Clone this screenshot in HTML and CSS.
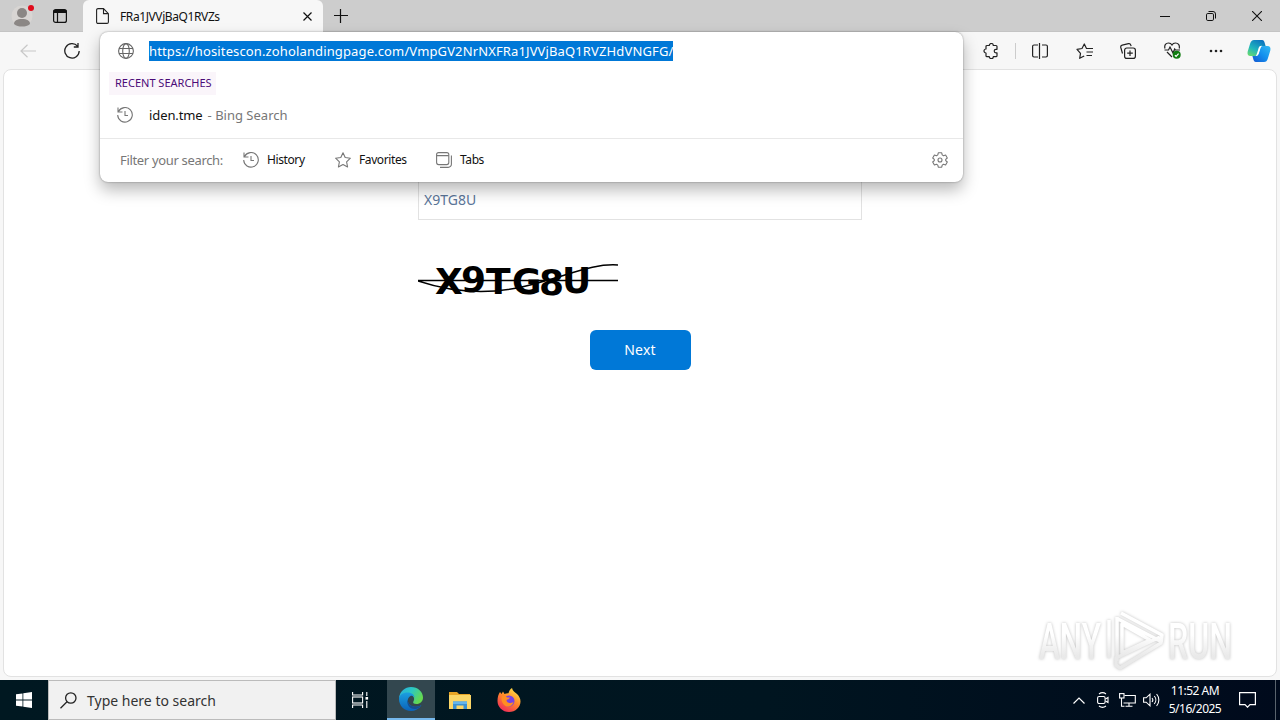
FILE: index.html
```html
<!DOCTYPE html>
<html lang="en">
<head>
	<meta charset="UTF-8">
	<title>FRa1JVVjBaQ1RVZs</title>
	<link rel="stylesheet" href="styles.css">
</head>
<body>
	<div class="titlebar">
		<div class="profile">
			<svg width="24" height="26" viewBox="0 0 24 26">
				<circle cx="11" cy="13" r="10.5" fill="#d8d5d3"/>
				<circle cx="11" cy="10" r="5" fill="#8b8785"/>
				<path d="M3 21c0-3.500 3-5 8-5s8 1.500 8 5c-2 2-5 2.500-8 2.500s-6-.5-8-2.500z" fill="#8b8785"/>
				<circle cx="20" cy="5" r="3" fill="#e00b1c"/>
			</svg>
		</div>
		<div class="workspace">
			<svg width="14" height="14" viewBox="0 0 14 14" fill="none" stroke="#111" stroke-width="1.2">
				<rect x=".6" y=".6" width="12.800" height="12.800" rx="2"/>
				<path d="M.6 2.500h12.800" stroke-width="3"/><path d="M4.500 3v10"/>
			</svg>
		</div>
		<div class="tab">
			<svg width="13" height="16" viewBox="0 0 13 16" fill="none" stroke="#222" stroke-width="1.1">
				<path d="M2 .6h5.500l4.900 5V14a1.400 1.400 0 0 1-1.400 1.400H2A1.400 1.400 0 0 1 .6 14V2A1.400 1.400 0 0 1 2 .6zM7.500.6V5.600h4.900"/>
			</svg>
			<span class="tab-title">FRa1JVVjBaQ1RVZs</span>
			<svg width="9" height="9" viewBox="0 0 9 9" stroke="#111" stroke-width="1.2"><path d="M.5.5l8 8M8.500.5l-8 8"/></svg>
		</div>
		<div class="new-tab">
			<svg width="14" height="14" viewBox="0 0 14 14" stroke="#111" stroke-width="1.2"><path d="M6.500 0v14M0 6.500h14"/></svg>
		</div>
		<div class="win-btns">
			<span><svg width="10" height="10" viewBox="0 0 10 10" stroke="#111"><path d="M0 5.500h10"/></svg></span>
			<span><svg width="10" height="10" viewBox="0 0 10 10" fill="none" stroke="#111"><rect x=".5" y="2.500" width="7" height="7" rx="1.300"/><path d="M2.500.5H7A2.500 2.500 0 0 1 9.500 3v4.500"/></svg></span>
			<span><svg width="10" height="10" viewBox="0 0 10 10" stroke="#111" stroke-width="1.100"><path d="M0 0l10 10M10 0L0 10"/></svg></span>
		</div>
	</div>

	<div class="toolbar">
		<div class="nav">
			<span><svg width="16" height="14" viewBox="0 0 16 14" fill="none" stroke="#c8c8c8" stroke-width="1.200"><path d="M16 7H1M7.500.7L1 7l6.500 6.300"/></svg></span>
			<span><svg width="16" height="16" viewBox="0 0 16 16" fill="none" stroke="#222" stroke-width="1.300"><path d="M13.500 3.200A7.200 7.200 0 1 0 15.200 8M14 0v4H9.800"/></svg></span>
		</div>
		<div class="tools">
			<span><svg width="16" height="16" viewBox="0 0 16 16" fill="none" stroke="#222" stroke-width="1.200" stroke-linejoin="round"><path d="M4 2.500h2.300a2 2 0 0 1 4 0H13a1 1 0 0 1 1 1v2.800h-1a1.800 1.800 0 0 0 0 3.600h1v2.800a1 1 0 0 1-1 1h-2.700a2 2 0 0 1-4 0H4a1 1 0 0 1-1-1V10a2 2 0 0 1 0-4V3.500a1 1 0 0 1 1-1z"/></svg></span>
			<i class="sep"></i>
			<span><svg width="16" height="16" viewBox="0 0 16 16" fill="none" stroke="#222" stroke-width="1.200"><path d="M6 2H2A1.400 1.400 0 0 0 .6 3.400v9.200A1.400 1.400 0 0 0 2 14h4M10 2h4a1.400 1.400 0 0 1 1.400 1.400v9.200A1.400 1.400 0 0 1 14 14h-4M7.500 0v16"/></svg></span>
			<span><svg width="17" height="16" viewBox="0 0 17 16" fill="none" stroke="#222" stroke-width="1.200" stroke-linejoin="round"><path d="M11.500 5.500h-1L8.300 1 6 5.500l-5 .8 3.500 4-.8 5 4.500-2.300M10 5.500h7M10.500 9h6.500M10.500 12.500h5.500"/></svg></span>
			<span><svg width="16" height="16" viewBox="0 0 16 16" fill="none" stroke="#222" stroke-width="1.200"><rect x="4.600" y="5" width="10.800" height="10.400" rx="2.200"/><path d="M10 7.500v5.500M7.200 10.200h5.600M2.500 10.500L.8 4.500a2 2 0 0 1 1.400-2.400L8.500.7a2 2 0 0 1 2.300 1.400l.3 1"/></svg></span>
			<span><svg width="17" height="17" viewBox="0 0 17 17" fill="none" stroke="#222" stroke-width="1.200"><path d="M1 6.500C0 3 2 1 4.500 1 6.500 1 7.500 2 8 3c.5-1 1.500-2 3.500-2C14 1 16 3 15.200 6.500M.5 8h4l1.500-3 3 6 1.700-4 .8 1h4.500M3 10l5 5"/><circle cx="12.700" cy="12.800" r="4" fill="#107c10" stroke="none"/><path d="M10.900 13.300l1.200 1 2.500-2.700" stroke="#fff"/></svg></span>
			<span><svg width="14" height="4" viewBox="0 0 14 4" fill="#222"><circle cx="2" cy="2" r="1.300"/><circle cx="7" cy="2" r="1.300"/><circle cx="12" cy="2" r="1.300"/></svg></span>
			<span class="copilot">
				<svg width="24" height="22" viewBox="0 0 24 22">
					<defs>
						<linearGradient id="cpA" x1=".2" y1="1" x2=".8" y2="0"><stop offset="0" stop-color="#63d873"/><stop offset=".4" stop-color="#1fb5bd"/><stop offset="1" stop-color="#0b6fbf"/></linearGradient>
						<linearGradient id="cpB" x1="0" y1="1" x2="1" y2="0"><stop offset="0" stop-color="#1456d0"/><stop offset=".5" stop-color="#1390ee"/><stop offset="1" stop-color="#35baf2"/></linearGradient>
					</defs>
					<path d="M7 0h8c2 0 2.500 2 3 4l.6 2h-3c-2 0-2.800 1-3.400 3l-1.500 4.500C10 15.500 9 16 7 16H3.500C1 16 0 14 .7 11.500L3 4C4 1 5 0 7 0z" fill="url(#cpA)"/>
					<path d="M17 22H9c-2 0-2.500-2-3-4l-.6-2H8c2 0 3-1 3.600-3l1.500-4.500C14 6.500 15 6 17 6h3.500c2.500 0 3.500 2 2.800 4.500L21 18c-1 3-2 4-4 4z" fill="url(#cpB)"/>
					<path d="M12.500 6.500c.7-.6 1.200-.7 2.300-.7-.8.7-1.100 1.700-1.500 3l-1.300 4.200c-.6 2-1.400 3-3 3l1.200-3.200 1.200-4c.3-1.200.6-1.800 1.100-2.300z" fill="#fff"/>
				</svg>
			</span>
		</div>
	</div>

	<div class="page">
		<div class="form">
			<div class="answer">X9TG8U</div>
			<svg class="captcha" width="200" height="50" viewBox="0 0 200 50">
				<g class="captcha-text">
					<text x="17" y="42">X</text>
					<text x="43" y="40">9</text>
					<text x="68" y="42">T</text>
					<text x="94" y="42">G</text>
					<text x="121" y="43">8</text>
					<text x="144" y="41">U</text>
				</g>
				<path d="M0 28.500h200M0 29C30 39 67 44 108 34S175 11 200 13" fill="none" stroke="#000" stroke-width="1.500"/>
			</svg>
			<button class="next">Next</button>
		</div>
	</div>

	<div class="taskbar">
		<div class="start">
			<svg width="16" height="16" viewBox="0 0 16 16" fill="#fff"><path d="M0 2.300L6.500 1.400v6.200H0zM7.300 1.300L16 0v7.600H7.300zM0 8.400h6.500v6.200L0 13.700zM7.300 8.400H16V16l-8.700-1.300z"/></svg>
		</div>
		<div class="search">
			<svg width="17" height="17" viewBox="0 0 17 17" fill="none" stroke="#222" stroke-width="1.300"><circle cx="10.800" cy="6" r="5.200"/><path d="M7 9.700L.5 16.200"/></svg>
			<span>Type here to search</span>
		</div>
		<div class="task view">
			<svg width="17" height="16" viewBox="0 0 17 16" fill="none" stroke="#fff" stroke-width="1.100"><path d="M.6 0v3h10V0M.6 16v-3h10v3M14.800 0v4M14.800 9v7"/><rect x=".6" y="5" width="10" height="6"/><rect x="13.500" y="5" width="2.600" height="2.600" fill="#fff" stroke="none"/></svg>
		</div>
		<div class="task active">
			<svg width="24" height="24" viewBox="0 0 24 24">
				<defs>
					<linearGradient id="edA" x1="0" y1="0" x2="1" y2=".5"><stop offset="0" stop-color="#2aa9e0"/><stop offset=".5" stop-color="#2bc8c4"/><stop offset="1" stop-color="#65d94f"/></linearGradient>
					<linearGradient id="edB" x1="0" y1="0" x2="0" y2="1"><stop offset="0" stop-color="#1b9fe0"/><stop offset="1" stop-color="#0b62b8"/></linearGradient>
				</defs>
				<path d="M0 11C1 4 6 0 12 0c7 0 12 5 12 10.500 0 4-3 6.500-6.500 6.500-3 0-4-1.500-3-2.800 2-3-.5-6.700-5-6.700C5 7.500 2 9 0 11z" fill="url(#edA)"/>
				<path d="M0 12c0-4 4-6.500 8.500-6.500 4.500 0 7 2.500 7 5-1-1.500-2.500-2-4-1.500-4 2-4 9 3 10.500 3 .6 5.500 0 8-1.500C20 22 16 24 12 24 5 24 0 18.500 0 12z" fill="url(#edB)"/>
				<path d="M8.500 12.500C7.500 17 10 22 16 22c3 0 5-2 6.500-4-2.500 1.500-5 2.100-8 1.500-3.500-.8-5.500-3-6-7z" fill="#164c90"/>
			</svg>
		</div>
		<div class="task">
			<svg width="22" height="19" viewBox="0 0 22 19">
				<path d="M0 1h8l2 2h11v4H0z" fill="#e8a526"/>
				<path d="M0 4h22v14H0z" fill="#fbd667"/>
				<path d="M4 18v-7.500h14V18h-3.500v-3.500h-7V18z" fill="#3b91d2"/><path d="M4 10.500h14V13H4z" fill="#64b5ec"/>
			</svg>
		</div>
		<div class="task">
			<svg width="24" height="24" viewBox="0 0 24 24">
				<defs><linearGradient id="ff" x1=".8" y1="0" x2=".2" y2="1"><stop offset="0" stop-color="#ffe64a"/><stop offset=".45" stop-color="#ff8a2a"/><stop offset="1" stop-color="#f0245c"/></linearGradient></defs>
				<path d="M3 4l1.500 2L6 3.500 7.500 6c1-.5 2.500-.8 4-.7C12 3 13 1 15 0c.5 3 3 4 5 6 2 2 3.500 4.500 3.500 7.500C23.500 19 18.500 24 12 24S.5 19 .5 13C.5 9 1.500 6 3 4z" fill="url(#ff)"/>
				<circle cx="12" cy="13" r="5.500" fill="#7542e5"/>
				<path d="M5 8c2-1 4 0 5 1.500h3c-.5 1.500-2.500 2-3.500 2.500 0 3 4 4 7 2-1 4-5 5.500-8 4S3.500 12 5 8z" fill="#ff8e22"/>
			</svg>
		</div>
		<div class="tray">
			<span><svg width="12" height="7" viewBox="0 0 12 7" fill="none" stroke="#fff" stroke-width="1.200"><path d="M.5 6.500L6 1l5.500 5.500"/></svg></span>
			<span><svg width="12" height="16" viewBox="0 0 12 16" fill="none" stroke="#fff" stroke-width="1.100"><rect x=".6" y="4.500" width="7.500" height="7" rx="1.500"/><path d="M8.500 7l2.500-1.500v5L8.500 9M2 2c2-1.500 5-1.500 7 0M2 14c2 1.500 5 1.500 7 0"/></svg></span>
			<span><svg width="17" height="14" viewBox="0 0 17 14" fill="none" stroke="#fff" stroke-width="1.100"><path d="M5.500 2.500h10.800v7.500H4.500M10 10v3M6.500 13.300h7M2.500 5v8.300h3"/><rect x=".6" y=".6" width="4.400" height="4.400"/></svg></span>
			<span><svg width="17" height="14" viewBox="0 0 17 14" fill="none" stroke="#fff" stroke-width="1.100"><path d="M.6 4.800h2.600L7 1.200v11.600L3.200 9.200H.6zM9 5c1 1.200 1 2.800 0 4M11.300 3c2 2.300 2 5.700 0 8M13.600 1c3 3.500 3 8.500 0 12"/></svg></span>
			<div class="clock"><div>11:52 AM</div><div>5/16/2025</div></div>
			<div class="notif"><svg width="17" height="16" viewBox="0 0 17 16" fill="none" stroke="#fff" stroke-width="1.200"><path d="M.6.6h15.800v12H11l-2.500 2.600L6 12.600H.6z"/></svg></div>
			<i class="desktop"></i>
		</div>
	</div>

	<!-- address bar dropdown, lies over toolbar and page -->
	<div class="omnibox">
		<div class="url-row">
			<svg width="16" height="16" viewBox="0 0 16 16" fill="none" stroke="#666" stroke-width="1.100"><circle cx="8" cy="8" r="7.400"/><ellipse cx="8" cy="8" rx="3.300" ry="7.400"/><path d="M1 5.500h14M1 10.500h14"/></svg>
			<span class="url">https://hositescon.zoholandingpage.com/VmpGV2NrNXFRa1JVVjBaQ1RVZHdVNGFG/</span>
		</div>
		<div class="recent">RECENT SEARCHES</div>
		<div class="result">
			<svg width="16" height="16" viewBox="0 0 16 16" fill="none" stroke="#777" stroke-width="1.100"><path d="M1.500 4.500a7.300 7.300 0 1 1-.8 3.500M1 .5v4.500h4.500M8 4v4.500h3"/></svg>
			<span class="query">iden.tme</span><span class="engine">- Bing Search</span>
		</div>
		<div class="filters">
			<span class="filter-label">Filter your search:</span>
			<div class="filter history"><svg width="16" height="16" viewBox="0 0 16 16" fill="none" stroke="#777" stroke-width="1.100"><path d="M1.500 4.500a7.300 7.300 0 1 1-.8 3.500M1 .5v4.500h4.500M8 4v4.500h3"/></svg><span>History</span></div>
			<div class="filter favs"><svg width="16" height="16" viewBox="0 0 16 16" fill="none" stroke="#777" stroke-width="1.100" stroke-linejoin="round"><path d="M8 .8l2.200 4.700 5.200.7-3.800 3.600 1 5.200L8 12.500 3.400 15l1-5.200L.6 6.200l5.200-.7z"/></svg><span>Favorites</span></div>
			<div class="filter tabs"><svg width="16" height="16" viewBox="0 0 16 16" fill="none" stroke="#777" stroke-width="1.100"><rect x=".6" y=".6" width="12.200" height="12" rx="2"/><path d="M.6 3.600h12.200M15.400 3.500v8.700a3.200 3.200 0 0 1-3.200 3.200H4"/></svg><span>Tabs</span></div>
			<svg class="gear" width="16" height="16" viewBox="0 0 16 16" fill="none" stroke="#777" stroke-width="1.100" stroke-linejoin="round"><path d="M6.300.8h3.400l.5 2.100 1.300.8 2.100-.7 1.700 3-1.600 1.400v1.200l1.600 1.400-1.700 3-2.100-.7-1.300.8-.5 2.100H6.300l-.5-2.100-1.300-.8-2.100.7-1.700-3 1.600-1.400V7.400L.7 6l1.700-3 2.100.7 1.300-.8z"/><circle cx="8" cy="8" r="2"/></svg>
		</div>
	</div>

	<svg class="watermark" width="210" height="68" viewBox="0 0 210 68">
		<defs><linearGradient id="wm" gradientUnits="userSpaceOnUse" x1="0" y1="4" x2="0" y2="64"><stop offset=".4" stop-color="#fff"/><stop offset=".75" stop-color="#e9e9e9"/></linearGradient></defs>
		<g class="mark-text" fill="url(#wm)">
			<text x="3" y="52" textLength="62" lengthAdjust="spacingAndGlyphs">ANY</text>
			<text x="132" y="52" textLength="64" lengthAdjust="spacingAndGlyphs">RUN</text>
		</g>
		<path d="M81 10v44M82 12l42 22M85 6l41 22-1 8-41 25-4-3V51l44-21M86 17v29l28-13zM73 13v38" fill="none" stroke="url(#wm)" stroke-width="3.500" stroke-linejoin="round"/>
	</svg>
</body>
</html>
```
FILE: styles.css
```css
*{padding: 0;margin: 0;box-sizing: border-box;}
body{
	width: 1280px;
	height: 720px;
	overflow: hidden;
	display: flex;
	flex-direction: column;
	position: relative;
	background-color: #f7f7f7;
	font-family: "Noto Sans", "Open Sans", sans-serif;
	font-size: 13px;
	color: #111;
}
svg{
	display: block;
	flex: none;
}
span{
	white-space: nowrap;
}

/* title bar */
.titlebar{
	height: 32px;
	flex: none;
	display: flex;
	background-color: #cdcdcd;
	border-bottom: 1px solid #c4c4c4;
}
.profile{
	width: 44px;
	padding: 3px 0 0 11px;
}
.workspace{
	width: 39px;
	padding: 9px 0 0 9px;
}
.tab{
	width: 240px;
	height: 32px;
	display: flex;
	align-items: center;
	padding: 0 11px 0 13px;
	background-color: #f7f7f7;
	border-radius: 6px 6px 0 0;
}
.tab-title{
	flex: 1;
	margin-left: 11px;
	font-size: 12px;
	letter-spacing: -0.4px;
}
.new-tab{
	padding: 9px 0 0 11px;
}
.win-btns{
	margin-left: auto;
	display: flex;
}
.win-btns span{
	width: 46px;
	display: flex;
	align-items: center;
	justify-content: center;
}

/* toolbar */
.toolbar{
	height: 37px;
	flex: none;
	display: flex;
	justify-content: space-between;
}
.nav, .tools{
	display: flex;
	align-items: center;
}
.nav{
	padding-left: 6px;
}
.nav span, .tools span{
	width: 44px;
	display: flex;
	justify-content: center;
}
.tools .copilot{
	width: 42px;
	padding-right: 1px;
}
.sep{
	width: 1px;
	height: 16px;
	margin: 0 2px;
	background-color: #ccc;
}

/* page */
.page{
	height: 608px;
	flex: none;
	margin: 0 3px 3px;
	background-color: #fff;
	border: 1px solid #e2e2e2;
	border-radius: 8px;
}
.form{
	width: 444px;
	margin: 0 auto;
	padding-top: 109px;
	display: flex;
	flex-direction: column;
}
.answer{
	height: 41px;
	padding: 10px 5px 0;
	border: 1px solid #e2e2e2;
	font-size: 14px;
	line-height: 19px;
	color: #5a7599;
}
.captcha{
	margin-top: 32px;
}
.captcha-text{
	font-family: "DejaVu Sans", sans-serif;
	font-weight: bold;
	font-size: 36px;
}
.next{
	align-self: center;
	width: 101px;
	height: 40px;
	margin-top: 28px;
	padding-bottom: 1px;
	border: none;
	border-radius: 6px;
	background-color: #0078d7;
	color: #fff;
	font-family: inherit;
	font-size: 14px;
	letter-spacing: 0.2px;
}

/* taskbar */
.taskbar{
	height: 40px;
	flex: none;
	display: flex;
	background: linear-gradient(90deg, #001821, #001520 60%, #000a1c);
}
.start, .task{
	width: 49px;
	display: flex;
	align-items: center;
	justify-content: center;
}
.start{
	width: 48px;
}
.task.view{
	width: 51px;
	padding-right: 2px;
}
.task.active{
	width: 48px;
	background-color: #33474f;
	border-bottom: 2px solid #76b9ed;
}
.search{
	width: 288px;
	display: flex;
	align-items: center;
	padding-left: 11px;
	background-color: #f1f1f1;
	border: 1px solid #bbb;
	color: #333;
}
.search span{
	margin-left: 10px;
	font-size: 14px;
}
.tray{
	margin-left: auto;
	display: flex;
	align-items: center;
	color: #fff;
}
.tray span{
	width: 24px;
	display: flex;
	justify-content: center;
}
.clock{
	width: 64px;
	text-align: center;
	font-size: 12px;
	line-height: 18px;
	letter-spacing: -0.5px;
}
.notif{
	width: 41px;
	padding-left: 12px;
}
.desktop{
	width: 5px;
	height: 40px;
	margin-left: 7px;
	border-left: 1px solid #59636d;
}

/* address bar dropdown */
.omnibox{
	position: absolute;
	left: 100px;
	top: 32px;
	width: 863px;
	height: 150px;
	background-color: #fff;
	border-radius: 8px;
	box-shadow: 0 0 2px rgba(0,0,0,.4), 0 8px 16px rgba(0,0,0,.28);
}
.url-row{
	height: 38px;
	display: flex;
	align-items: center;
	padding-left: 18px;
}
.url{
	margin-left: 15px;
	height: 20px;
	line-height: 20px;
	letter-spacing: 0.13px;
	background-color: #0078d7;
	color: #fff;
}
.recent{
	width: 107px;
	height: 23px;
	margin: 2px 0 0 9px;
	padding-left: 6px;
	line-height: 22px;
	font-size: 11px;
	white-space: nowrap;
	color: #4b0b78;
	background-color: #faf5fa;
}
.result{
	height: 43px;
	display: flex;
	align-items: center;
	padding: 0 0 4px 17px;
}
.query{
	margin-left: 16px;
	letter-spacing: -0.1px;
}
.engine{
	margin-left: 5px;
	color: #777;
}
.filters{
	height: 44px;
	display: flex;
	align-items: center;
	padding: 0 15px 2px 20px;
	border-top: 1px solid #e8e8e8;
}
.filter-label{
	width: 123px;
	letter-spacing: -0.33px;
	color: #777;
}
.filter{
	display: flex;
	align-items: center;
	gap: 8px;
	font-size: 12px;
	letter-spacing: -0.4px;
}
.history{
	width: 92px;
}
.favs{
	width: 101px;
}
.gear{
	margin-left: auto;
}

/* watermark */
.watermark{
	position: absolute;
	left: 1036px;
	top: 607px;
	filter: drop-shadow(0 0 1.5px rgba(0,0,0,.25));
}
.mark-text{
	font-family: "Roboto", sans-serif;
	font-weight: 500;
	font-size: 50px;
}
```
